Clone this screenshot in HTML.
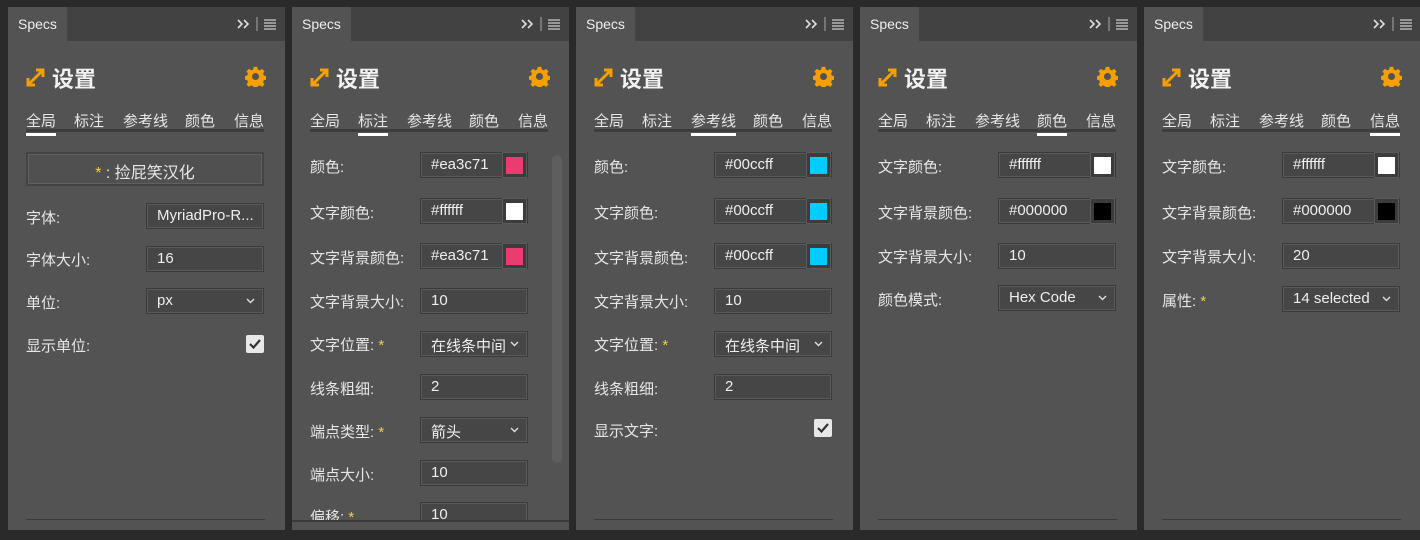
<!DOCTYPE html><html><head><meta charset="utf-8"><style>
*{box-sizing:border-box;margin:0;padding:0}
body{width:1420px;height:540px;background:#2a2a2a;position:relative;overflow:hidden;font-family:"Liberation Sans","Noto Sans CJK SC",sans-serif;color:#e6e6e6}
.p{position:absolute;top:7px;width:277px;height:523px;background:#535353;overflow:hidden}
.hd{position:absolute;left:0;top:0;right:0;height:34px;background:#424242}
.tab{position:absolute;left:0;top:0;width:59px;height:34px;background:#535353;font-size:14px;color:#eee;padding:9px 0 0 10px}
.hi{position:absolute;right:8px;top:9px}
.t{position:absolute;left:44px;top:55px;font-size:22px;font-weight:bold;color:#f2f2f2}
.ar{position:absolute;left:18px;top:61px}
.gr{position:absolute;left:237px;top:59px}
.tabs{position:absolute;left:18px;top:103px;width:238px;height:22px;border-bottom:3px solid #3c3c3c;font-size:15px}
.tabs span{position:absolute;top:0}
.tabs .a:after{content:"";position:absolute;left:0;right:0;bottom:-5px;height:3px;background:#fff}
.l{position:absolute;left:18px;font-size:15px;color:#e6e6e6}
.s{color:#f0d040}
.in{position:absolute;height:26px;background:#464646;border:1px solid #3a3a3a;box-shadow:0 0 0 1px #5a5a5a inset;font-size:15px;color:#eee;padding:3px 0 0 10px;white-space:nowrap}
.sw{position:absolute;right:0;top:-1px;width:25px;height:26px;background:#3c3c3c;border:1px solid #5a5a5a}
.sw i{position:absolute;left:3px;top:4px;width:17px;height:17px;display:block}
.dd svg{position:absolute;right:8px;top:9px}
.cb{position:absolute;left:238px;width:18px;height:18px;background:#e8e8e8;border-radius:2px}
.cb svg{position:absolute;left:3px;top:4px}
.bt{position:absolute;left:18px;right:20px;bottom:10px;height:1px;background:#3a3a3a}
</style></head><body>

<div class="p" style="left:8px">
<div class="hd"><div class="tab">Specs</div><svg class="hi" width="40" height="16" viewBox="0 0 40 16"><path d="M1 4l4 4-4 4M7 4l4 4-4 4" stroke="#ddd" stroke-width="1.6" fill="none"/><path d="M20 1v14" stroke="#999" stroke-width="1.2"/><path d="M27 4h12M27 7h12M27 10h12M27 13h12" stroke="#ccc" stroke-width="1.2"/></svg></div>
<svg class="ar" width="19" height="19" viewBox="0 0 19 19"><path d="M2 17L17 2M10 2h7v7M2 10v7h7" stroke="#f5a000" stroke-width="3" fill="none"/></svg>
<div class="t">设置</div>
<svg class="gr" width="21" height="21" viewBox="0 0 24 24"><path fill="#f5a000" d="M10 1h4l.6 3 2.4 1 2.5-1.7 2.8 2.8-1.7 2.5 1 2.4 3 .6v4l-3 .6-1 2.4 1.7 2.5-2.8 2.8-2.5-1.7-2.4 1-.6 3h-4l-.6-3-2.4-1-2.5 1.7-2.8-2.8 1.7-2.5-1-2.4-3-.6v-4l3-.6 1-2.4-1.7-2.5 2.8-2.8 2.5 1.7 2.4-1zM12 8a4 4 0 100 8 4 4 0 100-8z"/></svg>
<div class="tabs"><span class="a" style="left:0">全局</span><span style="left:48px">标注</span><span style="left:97px">参考线</span><span style="left:159px">颜色</span><span style="left:208px">信息</span></div>
<div style="position:absolute;left:18px;top:145px;width:238px;height:34px;border:2px solid #444;background:#505050;box-shadow:0 0 0 1px #606060 inset;text-align:center;font-size:16px;padding-top:5px"><span class="s">*</span> : 捡屁笑汉化</div>
<div class="l" style="top:200px">字体:</div><div class="in" style="left:138px;width:118px;top:196px">MyriadPro-R...</div>
<div class="l" style="top:242px">字体大小:</div><div class="in" style="left:138px;width:118px;top:239px">16</div>
<div class="l" style="top:285px">单位:</div><div class="in dd" style="left:138px;width:118px;top:281px">px<svg width="9" height="6" viewBox="0 0 9 6"><path d="M1 1l3.5 3.5L8 1" stroke="#ddd" stroke-width="1.4" fill="none"/></svg></div>
<div class="l" style="top:328px">显示单位:</div><div class="cb" style="top:328px"><svg width="12" height="10" viewBox="0 0 12 10"><path d="M1 5l3.5 3.5L11 1" stroke="#333" stroke-width="2.2" fill="none"/></svg></div>
<div class="bt"></div></div>

<div class="p" style="left:292px">
<div class="hd"><div class="tab">Specs</div><svg class="hi" width="40" height="16" viewBox="0 0 40 16"><path d="M1 4l4 4-4 4M7 4l4 4-4 4" stroke="#ddd" stroke-width="1.6" fill="none"/><path d="M20 1v14" stroke="#999" stroke-width="1.2"/><path d="M27 4h12M27 7h12M27 10h12M27 13h12" stroke="#ccc" stroke-width="1.2"/></svg></div>
<svg class="ar" width="19" height="19" viewBox="0 0 19 19"><path d="M2 17L17 2M10 2h7v7M2 10v7h7" stroke="#f5a000" stroke-width="3" fill="none"/></svg>
<div class="t">设置</div>
<svg class="gr" width="21" height="21" viewBox="0 0 24 24"><path fill="#f5a000" d="M10 1h4l.6 3 2.4 1 2.5-1.7 2.8 2.8-1.7 2.5 1 2.4 3 .6v4l-3 .6-1 2.4 1.7 2.5-2.8 2.8-2.5-1.7-2.4 1-.6 3h-4l-.6-3-2.4-1-2.5 1.7-2.8-2.8 1.7-2.5-1-2.4-3-.6v-4l3-.6 1-2.4-1.7-2.5 2.8-2.8 2.5 1.7 2.4-1zM12 8a4 4 0 100 8 4 4 0 100-8z"/></svg>
<div class="tabs"><span style="left:0">全局</span><span class="a" style="left:48px">标注</span><span style="left:97px">参考线</span><span style="left:159px">颜色</span><span style="left:208px">信息</span></div>
<div style="position:absolute;left:260px;top:148px;width:10px;height:308px;border-radius:5px;background:#5e5e5e"></div>
<div class="l" style="top:149px">颜色:</div><div class="in" style="left:128px;width:108px;top:145px">#ea3c71<div class="sw"><i style="background:#ea3c71"></i></div></div>
<div class="l" style="top:195px">文字颜色:</div><div class="in" style="left:128px;width:108px;top:191px">#ffffff<div class="sw"><i style="background:#fff"></i></div></div>
<div class="l" style="top:240px">文字背景颜色:</div><div class="in" style="left:128px;width:108px;top:236px">#ea3c71<div class="sw"><i style="background:#ea3c71"></i></div></div>
<div class="l" style="top:284px">文字背景大小:</div><div class="in" style="left:128px;width:108px;top:281px">10</div>
<div class="l" style="top:327px">文字位置: <span class="s">*</span></div><div class="in dd" style="left:128px;width:108px;top:324px">在线条中间<svg width="9" height="6" viewBox="0 0 9 6"><path d="M1 1l3.5 3.5L8 1" stroke="#ddd" stroke-width="1.4" fill="none"/></svg></div>
<div class="l" style="top:371px">线条粗细:</div><div class="in" style="left:128px;width:108px;top:367px">2</div>
<div class="l" style="top:414px">端点类型: <span class="s">*</span></div><div class="in dd" style="left:128px;width:108px;top:410px">箭头<svg width="9" height="6" viewBox="0 0 9 6"><path d="M1 1l3.5 3.5L8 1" stroke="#ddd" stroke-width="1.4" fill="none"/></svg></div>
<div class="l" style="top:457px">端点大小:</div><div class="in" style="left:128px;width:108px;top:453px">10</div>
<div class="l" style="top:499px">偏移: <span class="s">*</span></div><div class="in" style="left:128px;width:108px;top:495px">10</div>
<div style="position:absolute;left:0;right:0;top:513px;bottom:0;background:#535353;border-top:2px solid #3a3a3a"></div></div>

<div class="p" style="left:576px">
<div class="hd"><div class="tab">Specs</div><svg class="hi" width="40" height="16" viewBox="0 0 40 16"><path d="M1 4l4 4-4 4M7 4l4 4-4 4" stroke="#ddd" stroke-width="1.6" fill="none"/><path d="M20 1v14" stroke="#999" stroke-width="1.2"/><path d="M27 4h12M27 7h12M27 10h12M27 13h12" stroke="#ccc" stroke-width="1.2"/></svg></div>
<svg class="ar" width="19" height="19" viewBox="0 0 19 19"><path d="M2 17L17 2M10 2h7v7M2 10v7h7" stroke="#f5a000" stroke-width="3" fill="none"/></svg>
<div class="t">设置</div>
<svg class="gr" width="21" height="21" viewBox="0 0 24 24"><path fill="#f5a000" d="M10 1h4l.6 3 2.4 1 2.5-1.7 2.8 2.8-1.7 2.5 1 2.4 3 .6v4l-3 .6-1 2.4 1.7 2.5-2.8 2.8-2.5-1.7-2.4 1-.6 3h-4l-.6-3-2.4-1-2.5 1.7-2.8-2.8 1.7-2.5-1-2.4-3-.6v-4l3-.6 1-2.4-1.7-2.5 2.8-2.8 2.5 1.7 2.4-1zM12 8a4 4 0 100 8 4 4 0 100-8z"/></svg>
<div class="tabs"><span style="left:0">全局</span><span style="left:48px">标注</span><span class="a" style="left:97px">参考线</span><span style="left:159px">颜色</span><span style="left:208px">信息</span></div>
<div class="l" style="top:149px">颜色:</div><div class="in" style="left:138px;width:118px;top:145px">#00ccff<div class="sw"><i style="background:#00ccff"></i></div></div>
<div class="l" style="top:195px">文字颜色:</div><div class="in" style="left:138px;width:118px;top:191px">#00ccff<div class="sw"><i style="background:#00ccff"></i></div></div>
<div class="l" style="top:240px">文字背景颜色:</div><div class="in" style="left:138px;width:118px;top:236px">#00ccff<div class="sw"><i style="background:#00ccff"></i></div></div>
<div class="l" style="top:284px">文字背景大小:</div><div class="in" style="left:138px;width:118px;top:281px">10</div>
<div class="l" style="top:327px">文字位置: <span class="s">*</span></div><div class="in dd" style="left:138px;width:118px;top:324px">在线条中间<svg width="9" height="6" viewBox="0 0 9 6"><path d="M1 1l3.5 3.5L8 1" stroke="#ddd" stroke-width="1.4" fill="none"/></svg></div>
<div class="l" style="top:371px">线条粗细:</div><div class="in" style="left:138px;width:118px;top:367px">2</div>
<div class="l" style="top:413px">显示文字:</div><div class="cb" style="top:412px"><svg width="12" height="10" viewBox="0 0 12 10"><path d="M1 5l3.5 3.5L11 1" stroke="#333" stroke-width="2.2" fill="none"/></svg></div>
<div class="bt"></div></div>

<div class="p" style="left:860px">
<div class="hd"><div class="tab">Specs</div><svg class="hi" width="40" height="16" viewBox="0 0 40 16"><path d="M1 4l4 4-4 4M7 4l4 4-4 4" stroke="#ddd" stroke-width="1.6" fill="none"/><path d="M20 1v14" stroke="#999" stroke-width="1.2"/><path d="M27 4h12M27 7h12M27 10h12M27 13h12" stroke="#ccc" stroke-width="1.2"/></svg></div>
<svg class="ar" width="19" height="19" viewBox="0 0 19 19"><path d="M2 17L17 2M10 2h7v7M2 10v7h7" stroke="#f5a000" stroke-width="3" fill="none"/></svg>
<div class="t">设置</div>
<svg class="gr" width="21" height="21" viewBox="0 0 24 24"><path fill="#f5a000" d="M10 1h4l.6 3 2.4 1 2.5-1.7 2.8 2.8-1.7 2.5 1 2.4 3 .6v4l-3 .6-1 2.4 1.7 2.5-2.8 2.8-2.5-1.7-2.4 1-.6 3h-4l-.6-3-2.4-1-2.5 1.7-2.8-2.8 1.7-2.5-1-2.4-3-.6v-4l3-.6 1-2.4-1.7-2.5 2.8-2.8 2.5 1.7 2.4-1zM12 8a4 4 0 100 8 4 4 0 100-8z"/></svg>
<div class="tabs"><span style="left:0">全局</span><span style="left:48px">标注</span><span style="left:97px">参考线</span><span class="a" style="left:159px">颜色</span><span style="left:208px">信息</span></div>
<div class="l" style="top:149px">文字颜色:</div><div class="in" style="left:138px;width:118px;top:145px">#ffffff<div class="sw"><i style="background:#fff"></i></div></div>
<div class="l" style="top:195px">文字背景颜色:</div><div class="in" style="left:138px;width:118px;top:191px">#000000<div class="sw"><i style="background:#000"></i></div></div>
<div class="l" style="top:239px">文字背景大小:</div><div class="in" style="left:138px;width:118px;top:236px">10</div>
<div class="l" style="top:282px">颜色模式:</div><div class="in dd" style="left:138px;width:118px;top:278px">Hex Code<svg width="9" height="6" viewBox="0 0 9 6"><path d="M1 1l3.5 3.5L8 1" stroke="#ddd" stroke-width="1.4" fill="none"/></svg></div>
<div class="bt"></div></div>

<div class="p" style="left:1144px">
<div class="hd"><div class="tab">Specs</div><svg class="hi" width="40" height="16" viewBox="0 0 40 16"><path d="M1 4l4 4-4 4M7 4l4 4-4 4" stroke="#ddd" stroke-width="1.6" fill="none"/><path d="M20 1v14" stroke="#999" stroke-width="1.2"/><path d="M27 4h12M27 7h12M27 10h12M27 13h12" stroke="#ccc" stroke-width="1.2"/></svg></div>
<svg class="ar" width="19" height="19" viewBox="0 0 19 19"><path d="M2 17L17 2M10 2h7v7M2 10v7h7" stroke="#f5a000" stroke-width="3" fill="none"/></svg>
<div class="t">设置</div>
<svg class="gr" width="21" height="21" viewBox="0 0 24 24"><path fill="#f5a000" d="M10 1h4l.6 3 2.4 1 2.5-1.7 2.8 2.8-1.7 2.5 1 2.4 3 .6v4l-3 .6-1 2.4 1.7 2.5-2.8 2.8-2.5-1.7-2.4 1-.6 3h-4l-.6-3-2.4-1-2.5 1.7-2.8-2.8 1.7-2.5-1-2.4-3-.6v-4l3-.6 1-2.4-1.7-2.5 2.8-2.8 2.5 1.7 2.4-1zM12 8a4 4 0 100 8 4 4 0 100-8z"/></svg>
<div class="tabs"><span style="left:0">全局</span><span style="left:48px">标注</span><span style="left:97px">参考线</span><span style="left:159px">颜色</span><span class="a" style="left:208px">信息</span></div>
<div class="l" style="top:149px">文字颜色:</div><div class="in" style="left:138px;width:118px;top:145px">#ffffff<div class="sw"><i style="background:#fff"></i></div></div>
<div class="l" style="top:195px">文字背景颜色:</div><div class="in" style="left:138px;width:118px;top:191px">#000000<div class="sw"><i style="background:#000"></i></div></div>
<div class="l" style="top:239px">文字背景大小:</div><div class="in" style="left:138px;width:118px;top:236px">20</div>
<div class="l" style="top:283px">属性: <span class="s">*</span></div><div class="in dd" style="left:138px;width:118px;top:279px">14 selected<svg width="9" height="6" viewBox="0 0 9 6"><path d="M1 1l3.5 3.5L8 1" stroke="#ddd" stroke-width="1.4" fill="none"/></svg></div>
<div class="bt"></div></div>
</body></html>
